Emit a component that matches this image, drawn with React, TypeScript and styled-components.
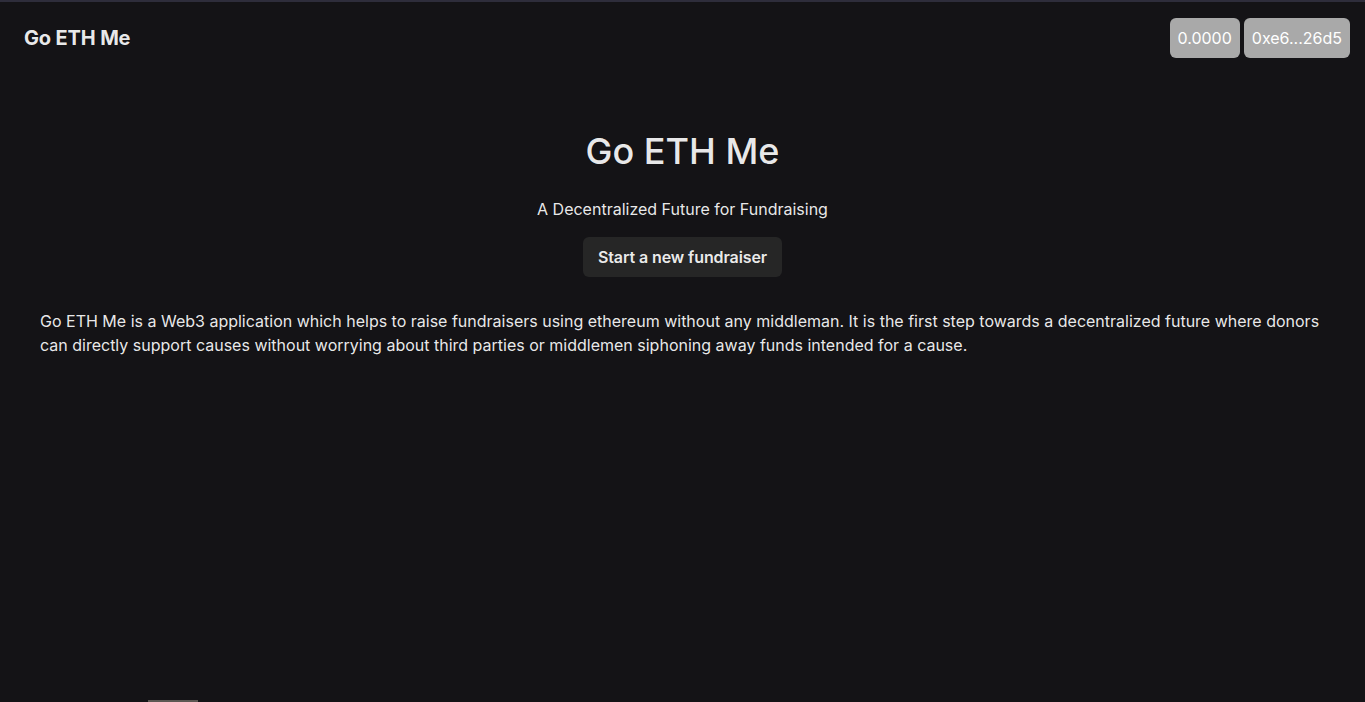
import React from 'react';
import styled, { createGlobalStyle } from 'styled-components';

const GlobalStyle = createGlobalStyle`
    html, body {
        margin: 0;
        padding: 0;
        background: #141316;
    }
    body {
        font-family: Inter, "Noto Sans", sans-serif;
        color: rgba(255, 255, 255, 0.92);
        min-height: 702px;
        border-top: 2px solid #2e2d3b;
        box-sizing: border-box;
    }
`;

const Header = styled.header`
    height: 72px;
    padding: 0 15px 0 24px;
    display: flex;
    align-items: center;
    justify-content: space-between;

    .brand {
        font-size: 20px;
        font-weight: 700;
        letter-spacing: -0.15px;
    }
`;

const WalletBox = styled.div`
    display: flex;
    gap: 4px;
`;

const Pill = styled.button`
    height: 40px;
    padding: 0 8px;
    border: none;
    border-radius: 6px;
    background: #a9a9a9;
    color: #ffffff;
    font-family: Inter, sans-serif;
    font-size: 16px;
    font-weight: 400;
    cursor: pointer;
`;

const Hero = styled.section`
    margin-top: 56px;
    display: flex;
    flex-direction: column;
    align-items: center;

    h1 {
        margin: 0;
        font-size: 36px;
        line-height: 43px;
        font-weight: 500;
    }

    .tagline {
        margin: 24px 0 16px;
        font-size: 16px;
        line-height: 24px;
    }
`;

const StartButton = styled.button`
    height: 40px;
    padding: 0 15px;
    border: none;
    border-radius: 6px;
    background: #262626;
    color: rgba(255, 255, 255, 0.92);
    font-family: Inter, sans-serif;
    font-size: 16px;
    font-weight: 600;
    letter-spacing: -0.1px;
    cursor: pointer;
`;

const About = styled.p`
    margin: 32px 40px 0;
    font-size: 16px;
    line-height: 24px;
`;

const ScrollThumb = styled.div`
    position: fixed;
    left: 148px;
    bottom: 0;
    width: 50px;
    height: 2px;
    background: #5d5853;
`;

const App = () => {
    return (
        <>
            <GlobalStyle />
            <Header>
                <div className="brand">Go ETH Me</div>
                <WalletBox>
                    <Pill>0.0000</Pill>
                    <Pill>0xe6...26d5</Pill>
                </WalletBox>
            </Header>
            <Hero>
                <h1>Go ETH Me</h1>
                <div className="tagline">A Decentralized Future for Fundraising</div>
                <StartButton>Start a new fundraiser</StartButton>
            </Hero>
            <About>
                Go ETH Me is a Web3 application which helps to raise fundraisers using ethereum without any
                middleman. It is the first step towards a decentralized future where donors can directly support
                causes without worrying about third parties or middlemen siphoning away funds intended for a cause.
            </About>
            <ScrollThumb />
        </>
    );
};

export default App;
